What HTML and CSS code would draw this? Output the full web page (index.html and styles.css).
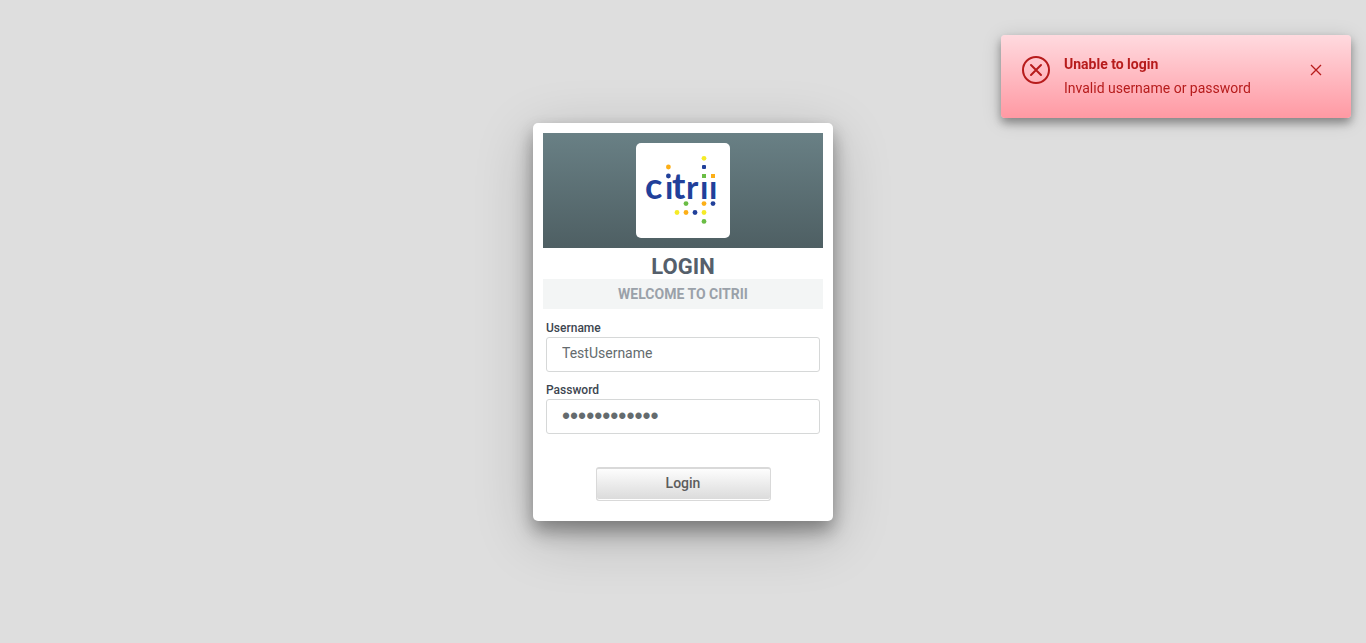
FILE: index.html
```html
<!DOCTYPE html>
<html lang="en">
<head>
<meta charset="utf-8">
<meta name="viewport" content="width=device-width, initial-scale=1">
<title>Login</title>
<link rel="stylesheet" href="styles.css">
</head>
<body>
<main class="page">
  <form class="card">
    <div class="banner">
      <svg class="logo" viewBox="0 0 94 95" role="img" aria-label="citrii">
        <text class="logo-word" y="56" x="9 29 36 50 64 73"><tspan class="logo-wide">c</tspan>ı<tspan class="logo-wide">t</tspan>rıı</text>
        <g class="blue"><circle cx="32.4" cy="33" r="2.4"/><rect x="66" y="22" width="4" height="4" rx="1"/><circle cx="77" cy="60.6" r="2.4"/><circle cx="59" cy="69.5" r="2.4"/></g>
        <g class="orange"><circle cx="32.4" cy="24" r="2.4"/><rect x="75" y="31" width="4" height="4"/><circle cx="50" cy="69.5" r="2.4"/><circle cx="68" cy="60.6" r="2.4"/></g>
        <g class="yellow"><circle cx="68" cy="15.3" r="2.4"/><circle cx="41" cy="69.5" r="2.4"/><circle cx="68" cy="69.5" r="2.4"/></g>
        <g class="green"><rect x="66" y="31" width="4" height="4"/><circle cx="50" cy="60.6" r="2.4"/><circle cx="68" cy="78.4" r="2.4"/></g>
      </svg>
    </div>
    <h1 class="title">LOGIN</h1>
    <p class="subtitle">WELCOME TO CITRII</p>
    <div class="fields">
      <div class="field">
        <label class="label" for="username">Username</label>
        <input class="input" id="username" type="text" value="TestUsername">
      </div>
      <div class="field">
        <label class="label" for="password">Password</label>
        <input class="input input-password" id="password" type="password" value="TestPassword">
      </div>
    </div>
    <button class="submit" type="button">Login</button>
  </form>
</main>
<section class="toast" role="alert">
  <svg class="toast-icon" viewBox="0 0 28 28" aria-hidden="true"><circle cx="14" cy="14" r="13"/><path d="M9 9l10 10M19 9L9 19"/></svg>
  <div class="toast-body">
    <h2 class="toast-title">Unable to login</h2>
    <p class="toast-text">Invalid username or password</p>
  </div>
  <button class="toast-close" type="button" aria-label="Close"><svg class="close-icon" viewBox="0 0 14 14" aria-hidden="true"><path d="M2 2l10 10M12 2L2 12"/></svg></button>
</section>
</body>
</html>
```
FILE: styles.css
```css
* { box-sizing: border-box; }
body {
  margin: 0;
  background: #dedede;
  font-family: Roboto, "Liberation Sans", sans-serif;
  font-size: 14px;
}
.page {
  min-height: 100vh;
  display: flex;
  align-items: center;
  justify-content: center;
}
.card {
  width: 300px;
  padding: 10px 10px 20px;
  display: flex;
  flex-direction: column;
  background: #fff;
  border-radius: 5px;
  box-shadow: 0 12px 20px rgba(0, 0, 0, .28), 0 15px 60px rgba(0, 0, 0, .2), 0 5px 15px rgba(0, 0, 0, .12);
}
.banner {
  padding: 10px;
  display: flex;
  justify-content: center;
  background: linear-gradient(#698085, #4e5f63);
}
.logo {
  width: 94px;
  height: 95px;
  background: #fff;
  border-radius: 5px;
}
.logo-word {
  font: 700 33px Lato, sans-serif;
  fill: #21409a;
}
.logo-wide { font-size: 36px; }
.blue { fill: #21409a; }
.orange { fill: #fcaf17; }
.yellow { fill: #f5eb27; }
.green { fill: #6abd45; }
.title {
  margin: 6px 0 0;
  font-size: 22px;
  line-height: 25px;
  font-weight: 700;
  text-align: center;
  color: #555f6b;
}
.subtitle {
  margin: 0;
  font-size: 14px;
  line-height: 30px;
  font-weight: 700;
  text-align: center;
  color: #9aa1a9;
  background: #f3f5f5;
}
.fields {
  padding: 12px 3px 0;
  display: grid;
  gap: 11px;
}
.field {
  display: flex;
  flex-direction: column;
  gap: 2px;
}
.label {
  font-size: 12px;
  line-height: 14px;
  font-weight: 500;
  color: #3d4650;
}
.input {
  width: 100%;
  height: 35px;
  padding: 0 15px 3px;
  border: 1px solid #d6d8d8;
  border-radius: 3px;
  background: #fff;
  font: inherit;
  color: #646b6e;
}
.input-password {
  padding-bottom: 0;
  font-family: "Liberation Sans", sans-serif;
  font-size: 23px;
}
.submit {
  align-self: center;
  width: 175px;
  height: 34px;
  margin-top: 33px;
  padding: 0 0 2px;
  border: 1px solid #d9d9d9;
  border-top-width: 2px;
  border-radius: 3px;
  background: linear-gradient(#fdfdfd, #dadada);
  box-shadow: inset 0 -1px #fff;
  font: inherit;
  font-weight: 500;
  color: #5c5c5c;
}
.toast {
  position: fixed;
  top: 35px;
  right: 15px;
  width: 350px;
  padding: 17px 24px 18px 21px;
  display: flex;
  align-items: flex-start;
  gap: 14px;
  border-radius: 4px;
  background: linear-gradient(#ffdadf, #ff99a3);
  box-shadow: 0 5px 10px rgba(0, 0, 0, .35), 0 3px 20px rgba(0, 0, 0, .15);
  color: #b71c1c;
}
.toast-icon {
  width: 28px;
  height: 28px;
  margin-top: 4px;
  fill: none;
  stroke: currentColor;
  stroke-width: 2;
  stroke-linecap: round;
}
.toast-body { flex: 1; }
.toast-title,
.toast-text {
  margin: 0;
  font-size: 14px;
  line-height: 24px;
}
.toast-title { font-weight: 700; }
.toast-close {
  padding: 4px;
  margin-top: 7px;
  border: 0;
  display: flex;
  background: none;
  color: inherit;
}
.close-icon {
  width: 14px;
  height: 14px;
  fill: none;
  stroke: currentColor;
  stroke-width: 1.3;
}
```
